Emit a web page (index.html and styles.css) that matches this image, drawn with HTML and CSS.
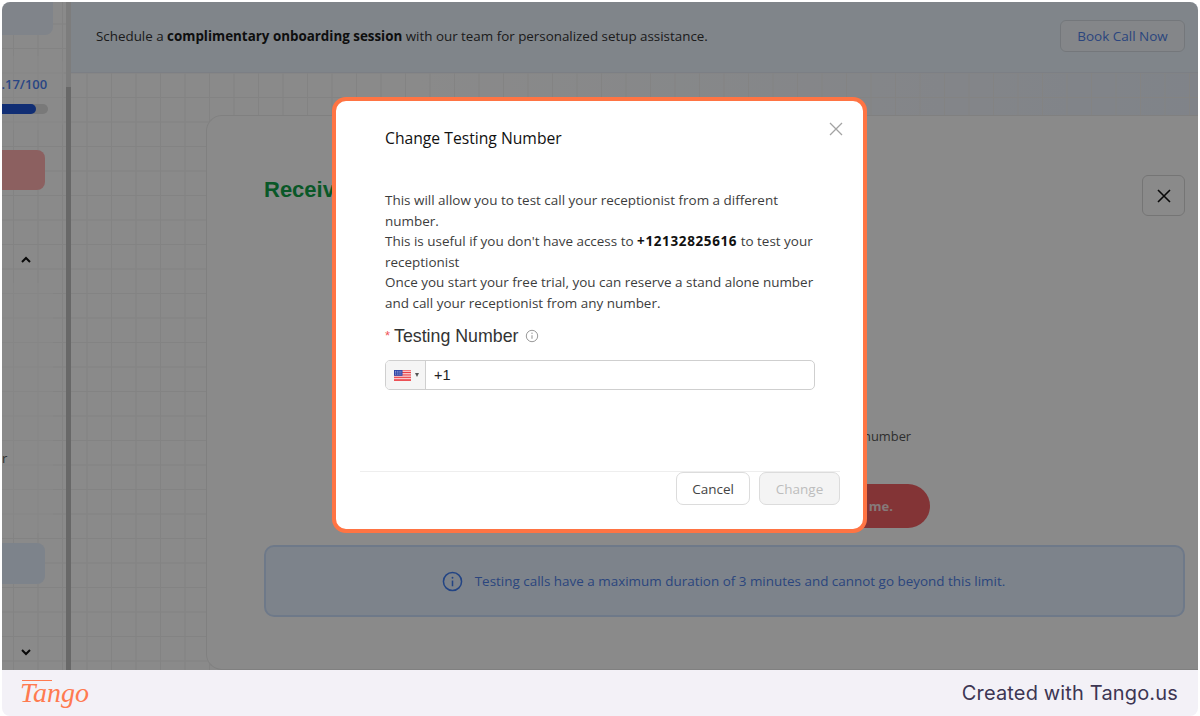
FILE: index.html
```html
<!DOCTYPE html>
<html lang="en">
<head>
<meta charset="utf-8">
<title>Change Testing Number</title>
<link rel="stylesheet" href="styles.css">
</head>
<body>
<div class="shot">
  <div class="stage">
    <div class="app">
      <aside class="sidebar">
        <div class="side-top"></div>
        <div class="score-card">
          <div class="score">4.17/100</div>
          <div class="track"><div class="fill"></div></div>
        </div>
        <div class="red-btn"></div>
        <div class="chev chev-up"><svg viewBox="0 0 12 8" width="12" height="8"><path d="M2 6l4-4 4 4" fill="none" stroke="#111" stroke-width="2"/></svg></div>
        <div class="side-panel"><span class="side-r">r</span></div>
        <div class="side-blue"></div>
        <div class="chev chev-down"><svg viewBox="0 0 12 8" width="12" height="8"><path d="M2 2l4 4 4-4" fill="none" stroke="#111" stroke-width="2"/></svg></div>
      </aside>
      <div class="scrollbar"><div class="thumb"></div></div>
      <main class="main">
        <header class="topbar">
          <p class="promo">Schedule a <b>complimentary onboarding session</b> with our team for personalized setup assistance.</p>
          <span class="book">Book Call Now</span>
        </header>
        <section class="card">
          <div class="card-head">
            <h1 class="receive">Receive a call</h1>
            <span class="close-box"><svg viewBox="0 0 16 16" width="16" height="16"><path d="M2 2l12 12M14 2L2 14" stroke="#111" stroke-width="1.6" fill="none"/></svg></span>
          </div>
          <p class="behind-text">number</p>
          <div class="cta-row"><span class="cta">me.</span></div>
          <div class="banner">
            <svg viewBox="0 0 22 22" width="21" height="21"><circle cx="11" cy="11" r="9.5" fill="none" stroke="#3f7cf0" stroke-width="1.6"/><path d="M11 10v6" stroke="#3f7cf0" stroke-width="1.6"/><circle cx="11" cy="7" r="1" fill="#3f7cf0"/></svg>
            <span>Testing calls have a maximum duration of 3 minutes and cannot go beyond this limit.</span>
          </div>
        </section>
      </main>
    </div>
    <div class="scrim"></div>
    <div class="modal">
      <svg class="modal-x" viewBox="0 0 14 14" width="14" height="14"><path d="M1 1l12 12M13 1L1 13" stroke="#a3a3a3" stroke-width="1.3" fill="none"/></svg>
      <h2 class="modal-title">Change Testing Number</h2>
      <p class="modal-text">This will allow you to test call your receptionist from a different<br>number.<br>This is useful if you don't have access to <b>+12132825616</b> to test your<br>receptionist<br>Once you start your free trial, you can reserve a stand alone number<br>and call your receptionist from any number.</p>
      <div class="field-label"><span class="req">*</span><span>Testing Number</span><svg viewBox="0 0 14 14" width="14" height="14"><circle cx="7" cy="7" r="5.7" fill="none" stroke="#9a9a9a" stroke-width="1"/><path d="M7 6.2v3.6" stroke="#9a9a9a" stroke-width="1.1"/><circle cx="7" cy="4.3" r=".7" fill="#9a9a9a"/></svg></div>
      <div class="phone">
        <div class="flag-box">
          <svg class="flag" viewBox="0 0 17 11" width="17" height="11">
            <rect width="17" height="11" fill="#fff"/>
            <path d="M0 .8h17M0 2.5h17M0 4.2h17M0 5.9h17M0 7.6h17M0 9.3h17M0 10.6h17" stroke="#ea3f45" stroke-width="1"/>
            <rect width="8.5" height="5.8" fill="#2f46a8"/>
            <path d="M1 1.4h6.5M1 2.8h6.5M1 4.2h6.5" stroke="#c9d2ee" stroke-width=".6" stroke-dasharray="1 .8"/>
          </svg>
          <i class="caret"></i>
        </div>
        <div class="dial">+1</div>
      </div>
      <div class="modal-foot">
        <span class="btn">Cancel</span>
        <span class="btn btn-off">Change</span>
      </div>
    </div>
  </div>
  <footer class="tango">
    <span class="logo">Tango</span>
    <span class="made">Created with Tango.us</span>
  </footer>
</div>
</body>
</html>
```
FILE: styles.css
```css
* { box-sizing: border-box; }
html, body { margin: 0; height: 100%; }
body {
  background: #fff;
  padding: 2px 2px 0;
  font-family: "Open Sans", "Noto Sans", sans-serif;
  overflow: hidden;
}
.shot {
  height: 714px;
  display: flex;
  flex-direction: column;
  border-radius: 8px;
  overflow: hidden;
}
.stage { position: relative; height: 668px; overflow: hidden; }
.app {
  display: flex;
  height: 100%;
  background-color: #fbfbfb;
  background-image:
    linear-gradient(#efefef 1px, transparent 1px),
    linear-gradient(90deg, #efefef 1px, transparent 1px),
    linear-gradient(90deg, #fbfbfb 35%, #e9eff9 100%);
  background-size: 24.5px 24.5px, 24.5px 24.5px, 100% 100%;
  background-position: 11px 21.5px, 11px 21.5px, 0 0;
}
.sidebar {
  width: 64px;
  flex: none;
  display: flex;
  flex-direction: column;
  overflow: hidden;
}
.side-top { height: 33px; width: 51px; background: #e9f0fb; border-radius: 0 0 8px 0; flex: none; }
.score-card {
  margin-top: 21px; height: 74px; flex: none;
  width: 62px;
  background: rgba(255,255,255,.35);
  border-radius: 0 10px 10px 0;
  padding-top: 19px;
}
.score {
  font-size: 13px; font-weight: 600; color: #4b80f0;
  margin-left: -8px; white-space: nowrap; line-height: 18px;
}
.track { margin-top: 11px; width: 46px; height: 10px; border-radius: 0 5px 5px 0; background: #dcdcdc; }
.fill { width: 34px; height: 10px; border-radius: 0 5px 5px 0; background: #1f55d4; }
.red-btn { margin-top: 20px; height: 40px; width: 43px; flex: none; background: #ffafb0; border-radius: 0 8px 8px 0; }
.chev { display: flex; justify-content: center; width: 48px; flex: none; }
.chev-up { margin-top: 66px; }
.side-panel {
  margin-top: 19px; height: 250px; width: 51px; flex: none; background: rgba(255,255,255,.3);
  position: relative; font-size: 13px; color: #555;
}
.side-r { position: absolute; left: 0; top: 166px; line-height: 18px; }
.side-blue { margin-top: 10px; height: 41px; width: 43px; flex: none; background: #e3eefd; border-radius: 0 8px 8px 0; }
.chev-down { margin-top: 64px; }
.scrollbar { width: 5px; flex: none; background: #e3e3e3; }
.thumb { margin-top: 85px; height: 583px; background: #bdbdbd; }
.main { flex: 1; min-width: 0; display: flex; flex-direction: column; }
.topbar {
  height: 71px; flex: none;
  display: flex; align-items: center; justify-content: space-between;
  padding: 0 13px 2px 25px;
  background: #e9f2fc;
  border-bottom: 1px solid #e2e8f2;
}
.promo { margin: 0; font-size: 13.39px; color: #333; }
.promo b { color: #1a1a1a; }
.book {
  width: 125px; height: 32px; display: flex; align-items: center; justify-content: center;
  border: 1px solid #d3d9e0; border-radius: 6px;
  background: #f1f5fa;
  font-size: 13.5px; color: #4f7fe6;
}
.card {
  flex: 1; margin: 42px 0 0 135px;
  background: #fcfcfc;
  border: 1px solid #eaeaea;
  border-right: 0;
  border-radius: 16px 0 0 16px;
  padding: 59px 13px 0 57px;
}
.card-head { display: flex; justify-content: space-between; align-items: flex-start; height: 42px; }
.receive { margin: 0; font: bold 22px/30px "Liberation Sans", sans-serif; color: #12a14a; }
.close-box {
  width: 43px; height: 41px; display: flex; align-items: center; justify-content: center;
  border: 1px solid #d5d5d5; border-radius: 6px; background: #fbfbfb;
}
.behind-text { margin: 210px 0 0 599px; font-size: 12.9px; line-height: 18px; color: #555; }
.cta-row { margin-top: 39px; display: flex; padding-left: 520px; }
.cta {
  width: 146px; height: 44px; display: flex; align-items: center; justify-content: flex-end;
  padding-right: 37px; border-radius: 22px;
  background: #ee5f63; color: #f4dede; font-size: 13px; font-weight: 700;
}
.banner {
  margin-top: 17px; height: 72px;
  display: flex; align-items: center; justify-content: center; gap: 12px;
  padding-right: 2px;
  background: #e4effd;
  border: 2px solid #c9dcf9; border-radius: 10px;
  font-size: 13.45px; color: #4f7fe6;
}
.scrim { position: absolute; inset: 0; background: rgba(0,0,0,.45); }
.modal {
  position: absolute; left: 330px; top: 95px; width: 535px; height: 436px;
  background: #fff;
  border: 4px solid #ff7443;
  border-radius: 14px;
  padding: 27px 46px 0 49px;
  color: #333;
}
.modal-x { position: absolute; right: 20px; top: 21px; }
.modal-title { margin: 0; font-size: 15.7px; line-height: 20px; font-weight: 500; color: #111; }
.modal-text { margin: 42px 0 0; font-size: 13.46px; line-height: 20.5px; color: #3c3c3c; }
.modal-text b { color: #111; letter-spacing: .65px; }
.field-label {
  margin-top: 11px; display: flex; align-items: center; height: 24px;
  font: 17.8px/24px "Liberation Sans", sans-serif; color: #333;
}
.req { color: #f0555a; font-size: 13px; width: 9px; }
.field-label svg { margin-left: 6px; }
.phone {
  margin-top: 12px; height: 30px; width: 430px; display: flex;
  border: 1px solid #cfcfcf; border-radius: 5px; overflow: hidden;
}
.flag-box {
  width: 40px; flex: none; display: flex; align-items: center; gap: 4px; padding-left: 8px;
  background: #f5f5f5; border-right: 1px solid #cfcfcf;
}
.caret { border-left: 2.5px solid transparent; border-right: 2.5px solid transparent; border-top: 4px solid #555; }
.dial { padding-left: 8px; font: 14.5px/28px "Liberation Sans", sans-serif; color: #222; }
.modal-foot {
  position: absolute; left: 24px; right: 23px; top: 370px;
  display: flex; justify-content: flex-end; gap: 9px;
  border-top: 1px solid #eeeeee;
}
.btn {
  height: 33px; width: 74px; display: flex; align-items: center; justify-content: center;
  border: 1px solid #dcdcdc; border-radius: 7px; background: #fff;
  font-size: 13.5px; color: #444;
}
.btn-off { width: 81px; background: #f4f4f4; color: #bdbdbd; }
.tango {
  height: 46px; flex: none; display: flex; align-items: center; justify-content: space-between;
  padding: 0 20px 0 18px; background: #f3f1f7;
}
.logo {
  font: italic 28px/1 "Liberation Serif", serif; color: #ff7a50; position: relative;
}
.logo::before {
  content: ""; position: absolute; left: 2px; top: 1px; width: 30px; height: 1px; background: #ff7a50;
}
.made { font: 20px/1 "Inter", sans-serif; color: #3d3653; letter-spacing: .16px; }
```
